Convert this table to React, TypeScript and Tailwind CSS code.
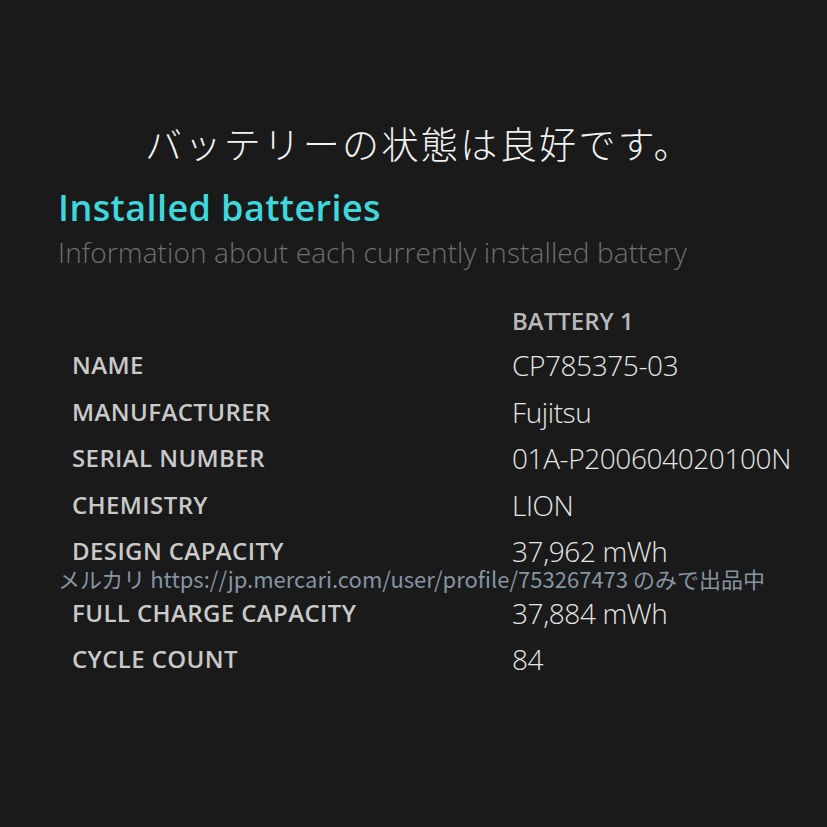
const rows: [string, string][] = [
  ["NAME", "CP785375-03"],
  ["MANUFACTURER", "Fujitsu"],
  ["SERIAL NUMBER", "01A-P200604020100N"],
  ["CHEMISTRY", "LION"],
  ["DESIGN CAPACITY", "37,962 mWh"],
];

const rowsAfter: [string, string][] = [
  ["FULL CHARGE CAPACITY", "37,884 mWh"],
  ["CYCLE COUNT", "84"],
];

const Row = ({ label, value }: { label: string; value: string }) => (
  <div className="grid grid-cols-[440px_1fr] h-[46.5px] items-center whitespace-nowrap">
    <div className="text-[24px] leading-none font-semibold text-[#c9c9c9] tracking-[0.4px]">{label}</div>
    <div className="text-[28px] leading-none font-light text-[#e6e6e6] tracking-[-0.4px]">{value}</div>
  </div>
);

export default function App() {
  return (
    <div
      className="w-[827px] h-[827px] bg-[#1a1a1a] flex flex-col overflow-hidden"
      style={{ fontFamily: '"Open Sans", "Noto Sans CJK JP", sans-serif' }}
    >
      <h1
        className="mt-[119px] h-[48px] leading-[48px] pl-[11px] text-center text-[37px] text-[#f2f2f2] tracking-[2.4px]"
        style={{ fontFamily: '"Noto Sans CJK JP", sans-serif', fontWeight: 300 }}
      >
        バッテリーの状態は良好です。
      </h1>

      <div className="px-[58px] mt-[21px] whitespace-nowrap">
        <div className="h-[40px] leading-[40px] text-[36px] font-semibold text-[#3fd6dc] tracking-[0.4px]">
          Installed batteries
        </div>
        <div className="mt-[6px] h-[36px] leading-[36px] text-[28px] font-light text-[#6f6f6f] tracking-[0.1px]">
          Information about each currently installed battery
        </div>
      </div>

      <div className="mt-[30px] pl-[72px]">
        <div className="grid grid-cols-[440px_1fr] h-[42px] items-center">
          <div />
          <div className="text-[24px] leading-none font-semibold text-[#b9b9b9]">BATTERY 1</div>
        </div>
        {rows.map(([l, v]) => (
          <Row key={l} label={l} value={v} />
        ))}
        <div
          className="-ml-[14px] h-[15px] -mt-[4px] mb-[4px] flex items-center whitespace-nowrap text-[22px] leading-none text-[#8595a3]"
          style={{ fontFamily: '"Noto Sans CJK JP", sans-serif' }}
        >
          メルカリ https://jp.mercari.com/user/profile/753267473 のみで出品中
        </div>
        {rowsAfter.map(([l, v]) => (
          <Row key={l} label={l} value={v} />
        ))}
      </div>
    </div>
  );
}
